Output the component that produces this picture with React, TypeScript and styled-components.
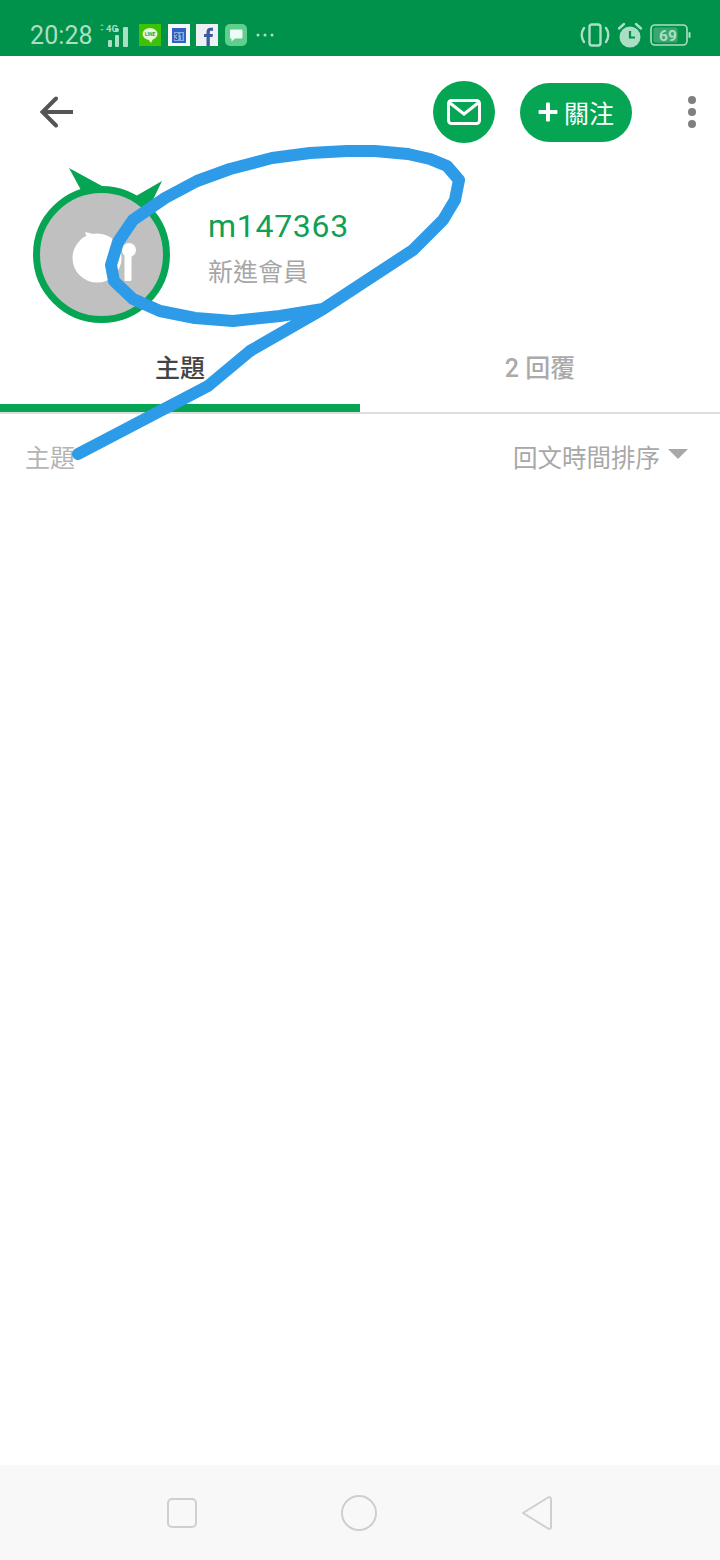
import styled, { createGlobalStyle } from "styled-components";

const GREEN = "#05a554";
const STATUS_TINT = "#abdfc4";

const scribble =
  "M78 454 L208 386 L250 351 L323 309 L413 250 L443 220 L455 200 L459 180 L447 166 L430 159 L408 154 L375 151 L347 151 L310 153 L272 158 L230 169 L197 181 L165 198 L133 220 L118 242 L111 265 L114 281 L133 299 L160 311 L195 318 L233 321 L280 316 L323 309";

const GlobalStyle = createGlobalStyle`
  html, body {
    margin: 0;
    background: #fff;
  }
  body {
    font-family: Roboto, "Noto Sans CJK TC", sans-serif;
  }
`;

const Page = styled.div`
  position: relative;
  width: 720px;
  height: 1560px;
  display: flex;
  flex-direction: column;
  overflow: hidden;
  background: #fff;
`;

const StatusBar = styled.div`
  height: 56px;
  flex: none;
  box-sizing: border-box;
  padding: 14px 29px 0 30px;
  display: flex;
  align-items: center;
  background: #00924a;
  color: ${STATUS_TINT};
`;

const Time = styled.span`
  font-size: 25px;
  line-height: 30px;
  width: 60px;
  letter-spacing: 0.1px;
  margin-top: 2px;
`;

const NotifyIcons = styled.div`
  display: flex;
  align-items: center;
  margin-left: 7px;
`;

const StatusRight = styled.div`
  margin-left: auto;
  display: flex;
  align-items: center;
  gap: 7px;
`;

const Header = styled.header`
  flex: none;
  box-sizing: border-box;
  height: 109px;
  padding: 25px 24px 22px 38px;
  display: flex;
  align-items: center;
`;

const BackButton = styled.div`
  display: flex;
  margin-right: auto;
`;

const MailButton = styled.div`
  width: 62px;
  height: 62px;
  border-radius: 50%;
  background: ${GREEN};
  display: flex;
  align-items: center;
  justify-content: center;
`;

const FollowButton = styled.div`
  width: 112px;
  height: 59px;
  margin-left: 25px;
  border-radius: 30px;
  background: ${GREEN};
  color: #fff;
  font-size: 25px;
  display: flex;
  align-items: center;
  justify-content: center;
  gap: 6px;
`;

const MoreDots = styled.div`
  margin-left: 56px;
  width: 8px;
  display: flex;
  flex-direction: column;
  gap: 4px;
`;

const Dot = styled.span`
  width: 8px;
  height: 8px;
  border-radius: 50%;
  background: #808080;
`;

const Profile = styled.section`
  flex: none;
  height: 165px;
  box-sizing: border-box;
  padding-left: 30px;
  display: flex;
  align-items: flex-start;
`;

const ProfileText = styled.div`
  margin: 39px 0 0 34px;
  display: flex;
  flex-direction: column;
`;

const UserName = styled.div`
  color: #0f9f57;
  font-size: 32px;
  line-height: 44px;
  letter-spacing: 0.7px;
`;

const Rank = styled.div`
  color: #a6a6a6;
  font-size: 25px;
  line-height: 40px;
  margin-top: 5px;
`;

const Tabs = styled.nav`
  flex: none;
  height: 84px;
  display: flex;
  border-bottom: 2px solid #dedede;
  box-sizing: border-box;
`;

const Tab = styled.div<{ $active?: boolean }>`
  flex: 1;
  box-sizing: border-box;
  padding-top: 20px;
  text-align: center;
  font-size: 25px;
  line-height: 38px;
  font-weight: 500;
  color: ${(p) => (p.$active ? "#444" : "#aaa")};
  border-bottom: 8px solid ${(p) => (p.$active ? GREEN : "transparent")};
  height: 82px;
`;

const SortRow = styled.div`
  flex: none;
  height: 84px;
  box-sizing: border-box;
  padding: 0 32px 0 25px;
  display: flex;
  align-items: center;
  justify-content: space-between;
  font-size: 25px;
  color: #b4b4b4;
`;

const SortControl = styled.div`
  display: flex;
  align-items: center;
  gap: 8px;
  color: #a8a8a8;
  font-size: 24.5px;
`;

const Caret = styled.span`
  width: 0;
  height: 0;
  border-left: 10px solid transparent;
  border-right: 10px solid transparent;
  border-top: 10px solid #a8a8a8;
  margin-top: -4px;
`;

const Content = styled.main`
  flex: 1;
`;

const NavBar = styled.footer`
  flex: none;
  height: 95px;
  background: #f8f8f8;
  display: flex;
  align-items: center;
  justify-content: center;
  gap: 144px;
  padding-left: 0;
`;

const ScribbleLayer = styled.svg`
  position: absolute;
  top: 0;
  left: 0;
  pointer-events: none;
`;

const TinySvgText = styled.text`
  font-family: Roboto, sans-serif;
  font-weight: 700;
`;

const SignalIcon = () => (
  <svg width="32" height="24" viewBox="0 0 32 24">
    <path d="M3 3l2-2 2 2zM3 6l2 2 2-2z" fill={STATUS_TINT} opacity="0.6" />
    <TinySvgText x="9" y="9" fontSize="9.5" fill={STATUS_TINT}>
      4G
    </TinySvgText>
    <rect x="11" y="17" width="4" height="7" rx="1" fill={STATUS_TINT} />
    <rect x="18" y="12" width="4" height="12" rx="1" fill={STATUS_TINT} />
    <rect x="26" y="4" width="5" height="20" rx="1" fill={STATUS_TINT} />
    <circle cx="20" cy="7" r="2" fill={STATUS_TINT} />
  </svg>
);

const LineIcon = () => (
  <svg width="22" height="22" viewBox="0 0 22 22">
    <rect width="22" height="22" fill="#3fc203" />
    <ellipse cx="11" cy="10" rx="7.5" ry="6" fill="#e8f5dc" />
    <path d="M9 15l3 4 2-4z" fill="#e8f5dc" />
    <TinySvgText x="11" y="12" fontSize="5" fill="#3fa010" textAnchor="middle">
      LINE
    </TinySvgText>
  </svg>
);

const CalendarIcon = () => (
  <svg width="22" height="22" viewBox="0 0 22 22">
    <rect width="22" height="22" fill="#f6f8fb" />
    <rect x="4" y="4" width="14" height="15" fill="#2f62c4" />
    <rect x="6" y="8" width="10" height="9" fill="#8cacdf" />
    <TinySvgText x="11" y="16" fontSize="8.5" fill="#1e4da6" textAnchor="middle">
      31
    </TinySvgText>
  </svg>
);

const FacebookIcon = () => (
  <svg width="22" height="22" viewBox="0 0 22 22">
    <rect width="22" height="22" fill="#eef0f3" />
    <path
      d="M10.5 22v-9H8v-3h2.500V8c0-2.800 1.600-4.300 4-4.300h2.500v3h-1.700c-1.200 0-1.500.6-1.500 1.500V10H17l-.5 3h-2.700v9z"
      fill="#3f5a9c"
    />
  </svg>
);

const MessageIcon = () => (
  <svg width="22" height="22" viewBox="0 0 22 22">
    <rect width="22" height="22" rx="5" fill="#5fcf8d" />
    <path
      d="M6 5.500h10.500a1 1 0 0 1 1 1v7a1 1 0 0 1-1 1H10l-3.500 3v-3H6a1 1 0 0 1-1-1v-7a1 1 0 0 1 1-1z"
      fill="#eefaf3"
    />
  </svg>
);

const MoreNotify = () => (
  <svg width="18" height="4" viewBox="0 0 18 4">
    <circle cx="2" cy="2" r="1.500" fill={STATUS_TINT} />
    <circle cx="9" cy="2" r="1.500" fill={STATUS_TINT} />
    <circle cx="16" cy="2" r="1.500" fill={STATUS_TINT} />
  </svg>
);

const NotifySlot = styled.span<{ $left: number }>`
  display: flex;
  margin-left: ${(p) => p.$left}px;
`;

const VibrateIcon = () => (
  <svg width="30" height="24" viewBox="0 0 30 24" fill="none" stroke={STATUS_TINT} strokeWidth="2.400">
    <rect x="9.500" y="1.500" width="11" height="21" rx="2.500" />
    <path d="M4 5c-3 4-3 10 0 14M26 5c3 4 3 10 0 14" strokeLinecap="round" />
  </svg>
);

const AlarmIcon = () => (
  <svg width="26" height="26" viewBox="0 0 26 26">
    <circle cx="13" cy="15" r="10.500" fill={STATUS_TINT} />
    <path d="M13 9v6.500h5" fill="none" stroke="#00924a" strokeWidth="2.200" />
    <path
      d="M2 6.500 L7 2M24 6.500 L19 2"
      fill="none"
      stroke={STATUS_TINT}
      strokeWidth="2.400"
      strokeLinecap="round"
    />
  </svg>
);

const BatteryIcon = () => (
  <svg width="41" height="22" viewBox="0 0 41 22">
    <rect x="1" y="1" width="36" height="20" rx="4" fill="none" stroke={STATUS_TINT} strokeWidth="1.600" />
    <rect x="3.500" y="3.500" width="24" height="15" rx="2" fill="#3ba76f" />
    <rect x="38.500" y="8" width="2" height="6" rx="1" fill={STATUS_TINT} />
    <TinySvgText x="18" y="16.500" fontSize="15.500" fill={STATUS_TINT} textAnchor="middle">
      69
    </TinySvgText>
  </svg>
);

const BackIcon = () => (
  <svg width="36" height="32" viewBox="0 0 36 32" fill="none" stroke="#555" strokeWidth="4">
    <path d="M35 16H6" />
    <path d="M18 2.500 L4.500 16 L18 29.500" strokeLinecap="round" strokeLinejoin="miter" />
  </svg>
);

const MailIcon = () => (
  <svg width="34" height="26" viewBox="0 0 34 26" fill="none" stroke="#fff" strokeWidth="3">
    <rect x="1.500" y="1.500" width="31" height="23" rx="3" />
    <path d="M3 4l14 11L31 4" />
  </svg>
);

const PlusIcon = () => (
  <svg width="20" height="20" viewBox="0 0 20 20" fill="#fff">
    <rect x="8" y="0.500" width="4" height="19" rx="1" />
    <rect x="0.500" y="8" width="19" height="4" rx="1" />
  </svg>
);

const Avatar = () => (
  <svg width="144" height="160" viewBox="30 165 144 160">
    <path d="M69 168 L82 192 L102 186z" fill={GREEN} />
    <path d="M162 181 L136 196 L150 206z" fill={GREEN} />
    <circle cx="101.500" cy="254.500" r="65" fill="#c0c0c0" stroke={GREEN} strokeWidth="7" />
    <circle cx="97" cy="258" r="24.500" fill="#fff" />
    <path d="M85 232 L90 245 L102 236z" fill="#fff" />
    <path d="M110 238 L116 248 L106 248z" fill="#fff" />
    <rect x="124.500" y="250" width="7" height="31" rx="1" fill="#fff" />
    <circle cx="129" cy="250" r="7" fill="#fff" />
  </svg>
);

const SquareKey = () => (
  <svg width="30" height="30" viewBox="0 0 30 30" fill="none" stroke="#cfcfcf" strokeWidth="2">
    <rect x="1" y="1" width="28" height="28" rx="4" />
  </svg>
);

const CircleKey = () => (
  <svg width="36" height="36" viewBox="0 0 36 36" fill="none" stroke="#cfcfcf" strokeWidth="2">
    <circle cx="18" cy="18" r="17" />
  </svg>
);

const TriangleKey = () => (
  <svg width="32" height="36" viewBox="0 0 32 36" fill="none" stroke="#cfcfcf" strokeWidth="2" strokeLinejoin="round">
    <path d="M2 18 L27 2.500 Q30 1.500 30 4 V32 Q30 34.500 27 33.500z" />
  </svg>
);

const App = () => {
  return (
    <Page>
      <GlobalStyle />
      <StatusBar>
        <Time>20:28</Time>
        <NotifyIcons>
          <SignalIcon />
          <NotifySlot $left={10}>
            <LineIcon />
          </NotifySlot>
          <NotifySlot $left={7}>
            <CalendarIcon />
          </NotifySlot>
          <NotifySlot $left={6}>
            <FacebookIcon />
          </NotifySlot>
          <NotifySlot $left={7}>
            <MessageIcon />
          </NotifySlot>
          <NotifySlot $left={9}>
            <MoreNotify />
          </NotifySlot>
        </NotifyIcons>
        <StatusRight>
          <VibrateIcon />
          <AlarmIcon />
          <BatteryIcon />
        </StatusRight>
      </StatusBar>

      <Header>
        <BackButton>
          <BackIcon />
        </BackButton>
        <MailButton>
          <MailIcon />
        </MailButton>
        <FollowButton>
          <PlusIcon />
          關注
        </FollowButton>
        <MoreDots>
          <Dot />
          <Dot />
          <Dot />
        </MoreDots>
      </Header>

      <Profile>
        <Avatar />
        <ProfileText>
          <UserName>m147363</UserName>
          <Rank>新進會員</Rank>
        </ProfileText>
      </Profile>

      <Tabs>
        <Tab $active>主題</Tab>
        <Tab>2 回覆</Tab>
      </Tabs>

      <SortRow>
        <span>主題</span>
        <SortControl>
          回文時間排序
          <Caret />
        </SortControl>
      </SortRow>

      <Content />

      <NavBar>
        <SquareKey />
        <CircleKey />
        <TriangleKey />
      </NavBar>

      <ScribbleLayer width="720" height="1560" viewBox="0 0 720 1560">
        <path
          d={scribble}
          fill="none"
          stroke="#2d9be8"
          strokeWidth="12"
          strokeLinecap="round"
          strokeLinejoin="round"
        />
      </ScribbleLayer>
    </Page>
  );
};

export default App;
